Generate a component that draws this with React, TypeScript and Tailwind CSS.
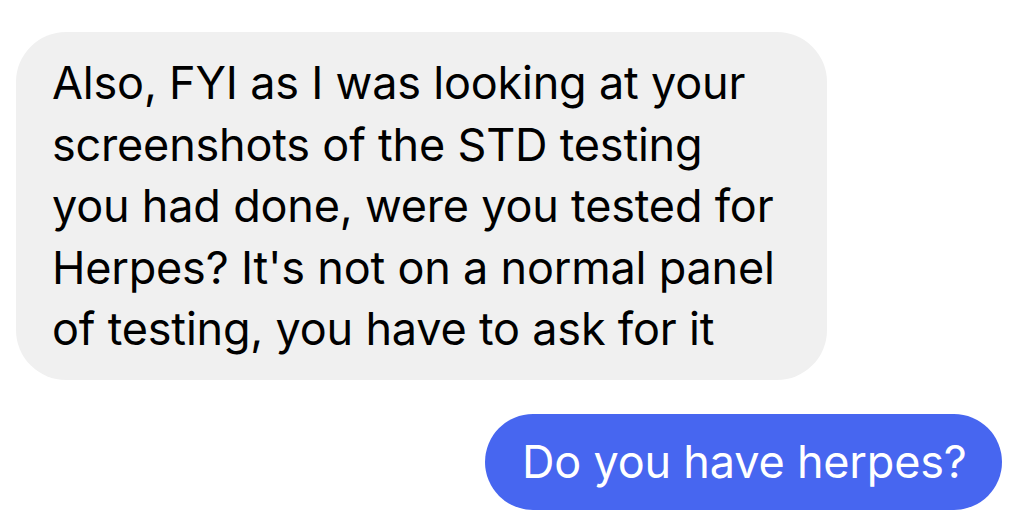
const lines = [
  "Also, FYI as I was looking at your",
  "screenshots of the STD testing",
  "you had done, were you tested for",
  "Herpes? It's not on a normal panel",
  "of testing, you have to ask for it",
];

export default function App() {
  return (
    <div className="min-h-screen bg-white pt-[32px] pl-[16px] pr-[22px] overflow-hidden" style={{ fontFamily: "Inter, 'Noto Sans', sans-serif" }}>
      <div className="flex flex-col">
        <div className="self-start w-[811px] h-[348px] rounded-[50px] bg-[#f0f0f0] pl-[36px] pt-[20px] text-[45px] leading-[61.5px] text-black tracking-[-0.2px]">
          {lines.map((l) => (
            <div key={l} className="whitespace-nowrap">{l}</div>
          ))}
        </div>
        <div className="self-end mt-[34px] w-[517px] h-[96px] rounded-[48px] bg-[#4766f0] pl-[37px] flex items-center text-[45px] text-white tracking-[-0.2px] whitespace-nowrap">
          Do you have herpes?
        </div>
      </div>
    </div>
  );
}
